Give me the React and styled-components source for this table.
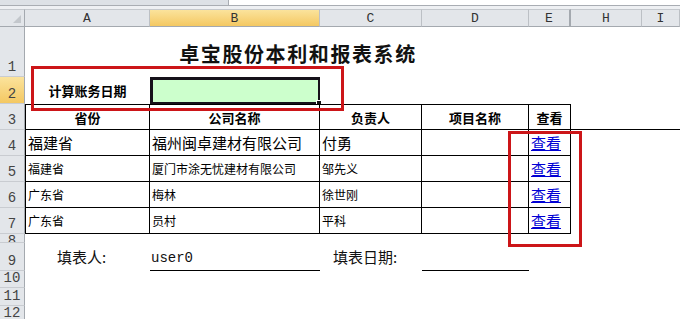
import React from 'react'
import styled, { createGlobalStyle } from 'styled-components'

const GlobalStyle = createGlobalStyle`
  html, body {
    margin: 0;
    padding: 0;
    background: #fff;
  }
  body {
    font-family: "Noto Sans CJK SC", "Noto Sans", sans-serif;
    overflow: hidden;
  }
  * { box-sizing: border-box; }
`

const StPage = styled.div`
  width: 680px;
  height: 319px;
  overflow: hidden;
  display: flex;
  flex-direction: column;
`

const StFormulaBar = styled.div`
  height: 6px;
  flex: none;
  display: flex;
  border-bottom: 1px solid #a9adb3;
`

const StFormulaLeft = styled.div`
  width: 229px;
  background: #dde1e6;
  border-right: 1px solid #a9adb3;
`

const StFormulaRight = styled.div`
  flex: 1;
  background: #fff;
`

const StGap = styled.div`
  height: 3px;
  flex: none;
  background: #eef0f3;
`

const StSheet = styled.div`
  position: relative;
  flex: 1;
  display: grid;
  grid-template-columns: 25px 125px 170px 102px 107px 42px 71px 1fr;
  grid-template-rows: 18px 50px 27px repeat(5, 26px) 9px 28px 17px 18px 1fr;
`

const StCorner = styled.div`
  position: relative;
  background: #e3e6ea;
  border-top: 1px solid #c4c8cd;
  border-right: 1px solid #a4a9af;
  border-bottom: 1px solid #a4a9af;
  &::after {
    content: '';
    position: absolute;
    right: 3px;
    bottom: 3px;
    border-left: 8px solid transparent;
    border-bottom: 8px solid #c3c7cc;
  }
`

const StColHead = styled.div`
  display: flex;
  align-items: center;
  justify-content: center;
  font-family: "Liberation Mono", monospace;
  font-size: 13px;
  color: #333;
  background: ${p => (p.$active ? 'linear-gradient(#fbe39c, #f4c862)' : '#e3e6ea')};
  border-top: 1px solid #c4c8cd;
  border-bottom: 1px solid #a4a9af;
  border-right: ${p => (p.$hidden ? '2px solid #a4a9af' : '1px solid #bcc0c5')};
`

const StRowHead = styled.div`
  display: flex;
  align-items: ${p => (p.$cut ? 'flex-start' : 'flex-end')};
  justify-content: center;
  overflow: hidden;
  font-family: "Liberation Mono", monospace;
  font-size: 14px;
  line-height: 14px;
  padding-bottom: ${p => (p.$cut ? '0' : '2px')};
  color: #444;
  background: ${p => (p.$active ? 'linear-gradient(#fbe39c, #f4c862)' : '#e3e6ea')};
  border-right: 1px solid #a4a9af;
  border-bottom: 1px solid #c9ccd1;
`

const StCell = styled.div`
  position: relative;
  display: flex;
  align-items: center;
  justify-content: ${p => p.$align || 'flex-start'};
  padding: 0 ${p => p.$pad || 2}px;
  font-size: ${p => p.$size || 12}px;
  font-weight: ${p => (p.$bold ? 700 : 400)};
  color: #000;
  white-space: nowrap;
  border-top: ${p => (p.$bt ? '1px solid #000' : 'none')};
  border-left: ${p => (p.$bl ? '1px solid #000' : 'none')};
  border-right: ${p => (p.$br ? '1px solid #000' : 'none')};
  border-bottom: ${p => (p.$bb ? '1px solid #000' : 'none')};
`

const StTitle = styled.div`
  grid-column: span 5;
  display: flex;
  align-items: center;
  justify-content: center;
  padding-top: 2px;
  font-size: 20px;
  font-weight: 700;
  letter-spacing: 1.6px;
  color: #111;
`

const StDateInput = styled.div`
  position: relative;
  background: #ccffcc;
  border: 2px solid #16111a;
  border-width: 3px 2px 2px 3px;
`

const StFillHandle = styled.span`
  position: absolute;
  right: -4px;
  bottom: -4px;
  width: 6px;
  height: 6px;
  background: #111;
  border: 1px solid #fff;
`

const StLink = styled.a`
  color: #0000d4;
  text-decoration: underline;
  font-size: 15px;
  cursor: pointer;
`

const StLabel = styled.div`
  display: flex;
  align-items: flex-end;
  padding: 0 0 4px ${p => p.$indent}px;
  font-size: 15px;
  color: #111;
  white-space: nowrap;
`

const StSignLine = styled.div`
  display: flex;
  align-items: flex-end;
  padding: 0 0 4px 1px;
  font-family: "Liberation Mono", monospace;
  font-size: 14px;
  color: #111;
  border-bottom: 1px solid #000;
`

const StMark = styled.div`
  position: absolute;
  left: ${p => p.$x}px;
  top: ${p => p.$y}px;
  width: ${p => p.$w}px;
  height: ${p => p.$h}px;
  border: 3px solid #cc1518;
  pointer-events: none;
`

const COLS = ['A', 'B', 'C', 'D', 'E', 'H', 'I']

const RECORDS = [
  { prov: '福建省', company: '福州闽卓建材有限公司', person: '付勇', big: true },
  { prov: '福建省', company: '厦门市涂无忧建材有限公司', person: '邹先义' },
  { prov: '广东省', company: '梅林', person: '徐世刚' },
  { prov: '广东省', company: '员村', person: '平科' },
]

const HEADERS = ['省份', '公司名称', '负责人', '项目名称', '查看']

const Empty = () => <div />

const App = () => {
  return (
    <StPage>
      <GlobalStyle />
      <StFormulaBar>
        <StFormulaLeft />
        <StFormulaRight />
      </StFormulaBar>
      <StGap />
      <StSheet>
        {/* column headers */}
        <StCorner />
        {COLS.map(c => (
          <StColHead key={c} $active={c === 'B'} $hidden={c === 'E'}>{c}</StColHead>
        ))}

        {/* row 1: title */}
        <StRowHead>1</StRowHead>
        <StTitle>卓宝股份本利和报表系统</StTitle>
        <Empty />
        <Empty />

        {/* row 2: date */}
        <StRowHead $active>2</StRowHead>
        <StCell $align="center" $size={13} $bold>计算账务日期</StCell>
        <StDateInput>
          <StFillHandle />
        </StDateInput>
        <Empty />
        <Empty />
        <Empty />
        <Empty />
        <Empty />

        {/* row 3: table header */}
        <StRowHead>3</StRowHead>
        {HEADERS.map((h, i) => (
          <StCell key={h} $align="center" $size={13} $bold $bt $br $bb $bl={i === 0}>{h}</StCell>
        ))}
        <StCell $bb />
        <StCell $bb />

        {/* rows 4-7: records */}
        {RECORDS.map((r, i) => {
          const size = r.big ? 15 : 12
          return (
            <React.Fragment key={i}>
              <StRowHead>{i + 4}</StRowHead>
              <StCell $size={size} $bl $br $bb>{r.prov}</StCell>
              <StCell $size={size} $br $bb>{r.company}</StCell>
              <StCell $size={size} $br $bb>{r.person}</StCell>
              <StCell $br $bb />
              <StCell $br $bb>
                <StLink>查看</StLink>
              </StCell>
              <Empty />
              <Empty />
            </React.Fragment>
          )
        })}

        {/* row 8 */}
        <StRowHead $cut>8</StRowHead>
        {COLS.map(c => <Empty key={c} />)}

        {/* row 9: signature */}
        <StRowHead>9</StRowHead>
        <StLabel $indent={32}>填表人:</StLabel>
        <StSignLine>user0</StSignLine>
        <StLabel $indent={13}>填表日期:</StLabel>
        <StSignLine />
        <Empty />
        <Empty />
        <Empty />

        {[10, 11, 12].map(n => (
          <React.Fragment key={n}>
            <StRowHead $cut={n === 12}>{n}</StRowHead>
            {COLS.map(c => <Empty key={c} />)}
          </React.Fragment>
        ))}

        <StMark $x={31} $y={57} $w={313} $h={45} />
        <StMark $x={508} $y={122} $w={74} $h={116} />
      </StSheet>
    </StPage>
  )
}

export default App
